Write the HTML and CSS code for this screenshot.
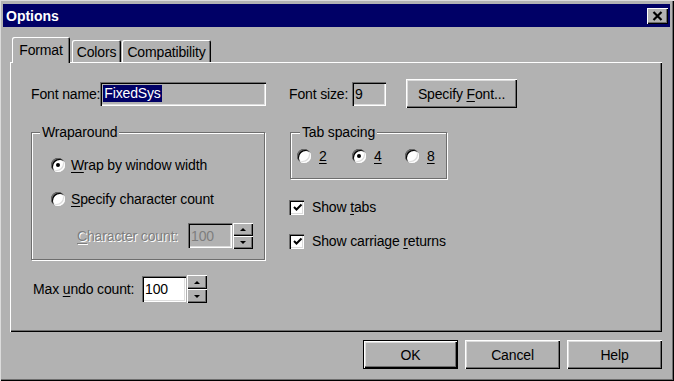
FILE: index.html
```
<!DOCTYPE html>
<html>
<head>
<meta charset="utf-8">
<title>Options</title>
<link rel="stylesheet" href="styles.css">
</head>
<body>
<div class="window">
  <div class="titlebar">
    <span class="title">Options</span>
    <div class="close-btn">
      <svg width="11" height="10" viewBox="0 0 11 10"><path d="M1.5 1 L9.5 9 M9.5 1 L1.5 9" stroke="#000" stroke-width="2.2"/></svg>
    </div>
  </div>
  <div class="tabs">
    <div class="tab active">Format</div>
    <div class="tab colors">Colors</div>
    <div class="tab compat">Compatibility</div>
  </div>
  <div class="panel">
    <div class="col col-left">
      <div class="row row-top">
        <span class="lbl">Font name:</span>
        <div class="field field-name"><span class="sel">FixedSys</span></div>
      </div>
      <div class="group group-wrap">
        <span class="group-title">Wraparound</span>
        <div class="opt-row opt-first"><span class="radio checked"></span><span class="opt-text"><u>W</u>rap by window width</span></div>
        <div class="opt-row"><span class="radio"></span><span class="opt-text"><u>S</u>pecify character count</span></div>
        <div class="count-row">
          <span class="lbl disabled"><u>C</u>haracter count:</span>
          <div class="field field-count">100</div>
          <div class="spinner">
            <div class="spin-btn"><span class="arrow-up"></span></div>
            <div class="spin-btn"><span class="arrow-down"></span></div>
          </div>
        </div>
      </div>
      <div class="row row-undo">
        <span class="lbl lbl-undo">Max <u>u</u>ndo count:</span>
        <div class="field field-undo">100</div>
        <div class="spinner spinner-tall">
          <div class="spin-btn"><span class="arrow-up"></span></div>
          <div class="spin-btn"><span class="arrow-down"></span></div>
        </div>
      </div>
    </div>
    <div class="col col-right">
      <div class="row row-top">
        <span class="lbl lbl-size">Font size:</span>
        <div class="field field-size">9</div>
        <div class="btn btn-font"><span>Specify <u>F</u>ont...</span></div>
      </div>
      <div class="group group-tabs">
        <span class="group-title">Tab spacing</span>
        <div class="tab-opts">
          <div class="tab-opt w2"><span class="radio"></span><span class="opt-text"><u>2</u></span></div>
          <div class="tab-opt w4"><span class="radio checked"></span><span class="opt-text"><u>4</u></span></div>
          <div class="tab-opt"><span class="radio"></span><span class="opt-text"><u>8</u></span></div>
        </div>
      </div>
      <div class="check-row check-first">
        <span class="checkbox"><svg width="11" height="11" viewBox="0 0 11 11"><path d="M2 5 L4.5 7.5 L9.5 2.5" fill="none" stroke="#000" stroke-width="2"/></svg></span>
        <span class="check-text">Show <u>t</u>abs</span>
      </div>
      <div class="check-row">
        <span class="checkbox"><svg width="11" height="11" viewBox="0 0 11 11"><path d="M2 5 L4.5 7.5 L9.5 2.5" fill="none" stroke="#000" stroke-width="2"/></svg></span>
        <span class="check-text">Show carriage <u>r</u>eturns</span>
      </div>
    </div>
  </div>
  <div class="buttons">
    <div class="default-frame"><div class="btn btn-action">OK</div></div>
    <div class="btn btn-action">Cancel</div>
    <div class="btn btn-action">Help</div>
  </div>
</div>
</body>
</html>
```

FILE: styles.css
```
html, body {
  margin: 0;
  padding: 0;
  background: #b2b2b2;
}
body {
  font-family: "Liberation Sans", Arial, sans-serif;
  font-size: 14px;
  letter-spacing: -0.15px;
  color: #000;
  white-space: nowrap;
}
u {
  text-decoration: underline;
  text-underline-offset: 2px;
}
.window {
  width: 674px;
  height: 381px;
  box-sizing: border-box;
  padding: 4px 4px 0 3px;
  background: #b2b2b2;
  box-shadow: inset 1px 1px 0 #dcdcdc, inset -1px -1px 0 #000, inset -2px -2px 0 #6e6e6e;
}
.titlebar {
  height: 23px;
  background: #000066;
  display: flex;
  align-items: center;
  justify-content: space-between;
  padding: 0 2px 0 3px;
}
.title {
  color: #fff;
  font-weight: bold;
  letter-spacing: 0;
}
.close-btn {
  width: 21px;
  height: 16px;
  box-sizing: border-box;
  background: #b2b2b2;
  display: flex;
  align-items: center;
  justify-content: center;
  box-shadow: inset 1px 1px 0 #fff, inset -1px -1px 0 #000, inset -2px -2px 0 #6e6e6e;
}
.close-btn svg {
  display: block;
}
.tabs {
  margin: 10px 0 0 9px;
  height: 26px;
  display: flex;
  align-items: flex-end;
}
.tab {
  height: 22px;
  margin-bottom: 1px;
  box-sizing: border-box;
  display: flex;
  align-items: center;
  justify-content: center;
  border-radius: 2px 2px 0 0;
  box-shadow: inset 1px 1px 0 #fff, inset -1px 0 0 #000, inset -2px 0 0 #6e6e6e;
  padding-top: 1px;
}
.tab.active {
  height: 26px;
  margin-bottom: 0;
  width: 58px;
  margin-right: 2px;
  position: relative;
  z-index: 1;
  background: #b2b2b2;
  padding-bottom: 2px;
}
.tab.colors {
  width: 49px;
  margin-right: 1px;
}
.tab.compat {
  width: 89px;
}
.panel {
  margin: -1px 0 0 7px;
  width: 652px;
  height: 270px;
  box-sizing: border-box;
  padding: 17px 0 0 21px;
  display: flex;
  box-shadow: inset 1px 1px 0 #fff, inset -1px -1px 0 #000, inset -2px -2px 0 #6e6e6e;
}
.col {
  display: flex;
  flex-direction: column;
}
.col-left {
  width: 235px;
}
.col-right {
  margin-left: 23px;
}
.row {
  display: flex;
  align-items: center;
}
.row-top {
  height: 29px;
}
.col-left .row-top {
  justify-content: space-between;
}
.field {
  box-sizing: border-box;
  display: flex;
  align-items: center;
  padding: 0 3px;
  box-shadow: inset 1px 1px 0 #6e6e6e, inset 2px 2px 0 #000, inset -1px -1px 0 #fff, inset -2px -2px 0 #dcdcdc;
}
.field-name {
  width: 167px;
  height: 24px;
}
.sel {
  background: #000066;
  color: #fff;
  padding: 0 1px;
  line-height: 17px;
}
.lbl-size {
  width: 63px;
}
.field-size {
  width: 34px;
  height: 24px;
}
.btn {
  box-sizing: border-box;
  display: flex;
  align-items: center;
  justify-content: center;
  background: #b2b2b2;
  box-shadow: inset 1px 1px 0 #fff, inset -1px -1px 0 #000, inset -2px -2px 0 #6e6e6e, inset 2px 2px 0 #dcdcdc;
}
.btn-font {
  width: 111px;
  height: 29px;
  margin-left: 20px;
}
.group {
  box-sizing: border-box;
  border: 1px solid #6e6e6e;
  box-shadow: 1px 1px 0 #fff, inset 1px 1px 0 #fff;
  display: flex;
  flex-direction: column;
  align-items: flex-start;
}
.group-title {
  background: #b2b2b2;
  padding: 0 2px;
  line-height: 16px;
  margin-top: -9px;
}
.group-wrap {
  margin-top: 24px;
  width: 234px;
  height: 128px;
  padding-left: 19px;
}
.group-wrap .group-title {
  margin-left: -11px;
}
.opt-row {
  height: 18px;
  display: flex;
  align-items: center;
  margin-top: 16px;
}
.opt-text {
  margin-left: 6px;
}
.radio {
  width: 14px;
  height: 14px;
  flex: none;
  border-radius: 50%;
  background: #fff;
  box-shadow: inset 1px 1px 0 #6e6e6e, inset 2px 2px 0 #000, inset -1px -1px 0 #fff, inset -2px -2px 0 #dcdcdc;
  display: flex;
  align-items: center;
  justify-content: center;
}
.radio.checked::after {
  content: "";
  width: 4px;
  height: 4px;
  border-radius: 50%;
  background: #000;
}
.count-row {
  margin-top: 14px;
  height: 27px;
  width: 202px;
  display: flex;
  align-items: center;
}
.lbl.disabled {
  margin-left: 26px;
  color: #7e7e7e;
  text-shadow: 1px 1px 0 #fff;
}
.field-count {
  margin-left: auto;
  width: 44px;
  height: 25px;
  color: #7e7e7e;
}
.spinner {
  margin-left: 1px;
  display: flex;
  flex-direction: column;
}
.spin-btn {
  width: 20px;
  height: 13px;
  box-sizing: border-box;
  display: flex;
  align-items: center;
  justify-content: center;
  box-shadow: inset 1px 1px 0 #fff, inset -1px -1px 0 #000, inset -2px -2px 0 #6e6e6e;
}
.spinner-tall .spin-btn {
  height: 14px;
}
.arrow-up {
  width: 0;
  height: 0;
  border-left: 3px solid transparent;
  border-right: 3px solid transparent;
  border-bottom: 3px solid #000;
}
.arrow-down {
  width: 0;
  height: 0;
  border-left: 3px solid transparent;
  border-right: 3px solid transparent;
  border-top: 3px solid #000;
}
.row-undo {
  margin-top: 15px;
  height: 28px;
}
.lbl-undo {
  width: 109px;
  padding-left: 2px;
}
.field-undo {
  width: 44px;
  height: 26px;
  background: #fff;
}
.group-tabs {
  margin: 24px 0 0 1px;
  width: 157px;
  height: 47px;
  padding-left: 6px;
}
.group-tabs .group-title {
  margin-left: 3px;
}
.tab-opts {
  display: flex;
  margin-top: 7px;
  height: 18px;
  align-items: center;
}
.tab-opt {
  display: flex;
  align-items: center;
}
.tab-opt .opt-text {
  margin-left: 8px;
}
.tab-opt.w2 {
  width: 55px;
}
.tab-opt.w4 {
  width: 53px;
}
.check-row {
  height: 18px;
  display: flex;
  align-items: center;
  margin-top: 16px;
}
.check-row.check-first {
  margin-top: 19px;
}
.checkbox {
  width: 15px;
  height: 15px;
  box-sizing: border-box;
  background: #fff;
  display: flex;
  align-items: center;
  justify-content: center;
  box-shadow: inset 1px 1px 0 #6e6e6e, inset 2px 2px 0 #000, inset -1px -1px 0 #fff, inset -2px -2px 0 #dcdcdc;
}
.checkbox svg {
  display: block;
  margin: 1px 0 0 1px;
}
.check-text {
  margin-left: 8px;
}
.buttons {
  margin-top: 8px;
  padding-right: 8px;
  display: flex;
  justify-content: flex-end;
  gap: 7px;
}
.btn-action {
  width: 95px;
  height: 29px;
}
.default-frame {
  width: 95px;
  height: 29px;
  box-sizing: border-box;
  border: 1px solid #000;
  display: flex;
}
.default-frame .btn-action {
  width: 93px;
  height: 27px;
}
```
